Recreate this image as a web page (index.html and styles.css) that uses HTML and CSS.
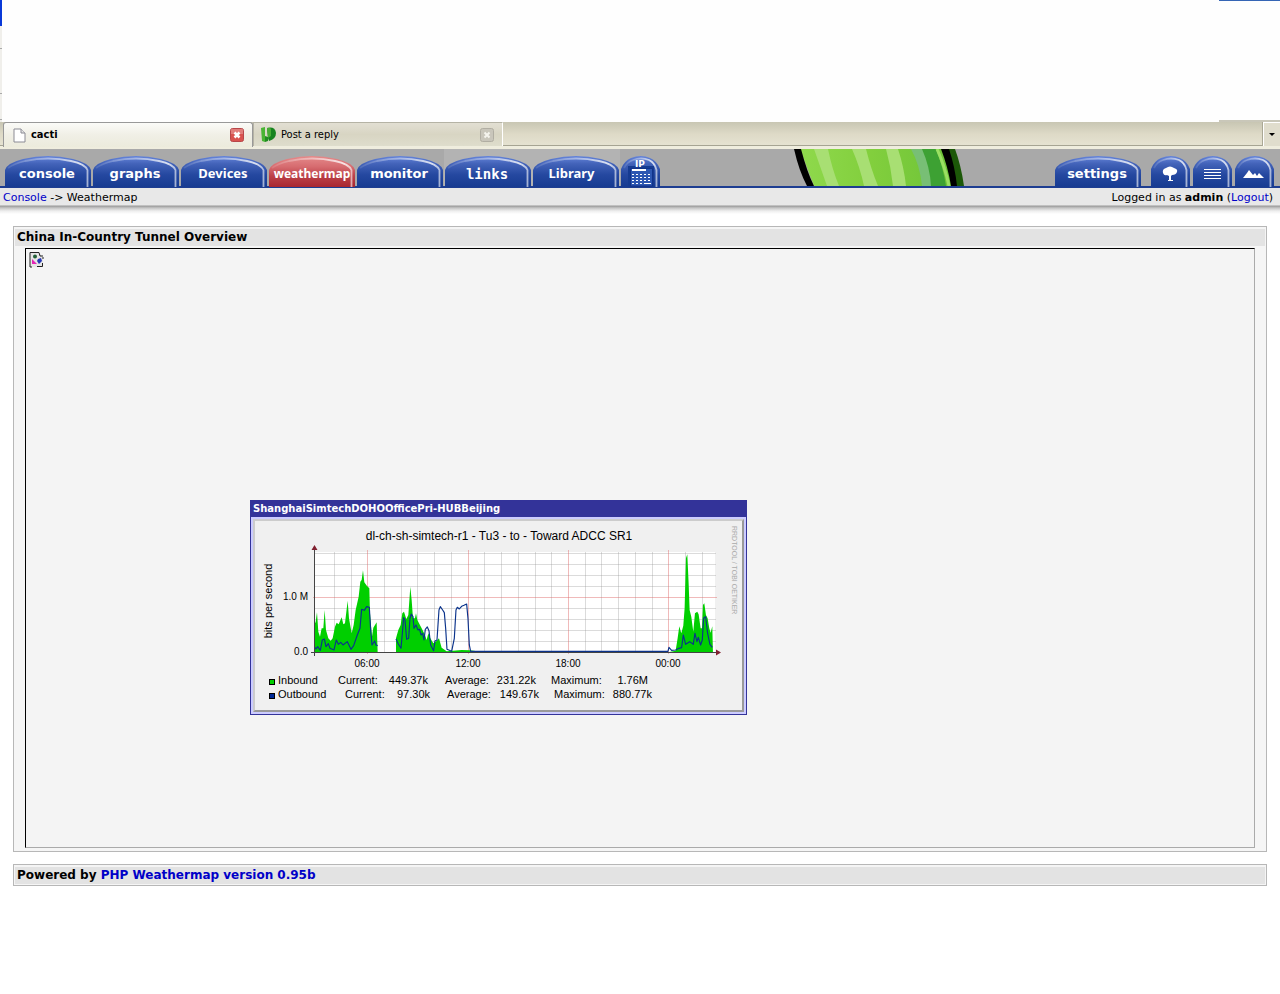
FILE: index.html
```html
<!DOCTYPE html>
<html lang="en">
<head>
<meta charset="utf-8">
<title>cacti</title>
<link rel="stylesheet" href="styles.css">
</head>
<body>
<svg class="defs" aria-hidden="true">
  <defs>
    <linearGradient id="blue" x1="0" y1="0" x2="0" y2="1"><stop offset="0" stop-color="#6685da"/><stop offset=".25" stop-color="#4363b9"/><stop offset=".6" stop-color="#2548a0"/><stop offset="1" stop-color="#173b91"/></linearGradient>
    <linearGradient id="red" x1="0" y1="0" x2="0" y2="1"><stop offset="0" stop-color="#e58b8b"/><stop offset=".35" stop-color="#d66b6f"/><stop offset=".65" stop-color="#bc4048"/><stop offset="1" stop-color="#a82730"/></linearGradient>
    <linearGradient id="shine" x1="0" y1="0" x2="1" y2="0"><stop offset="0" stop-color="#fff" stop-opacity=".1"/><stop offset=".5" stop-color="#fff" stop-opacity=".45"/><stop offset=".9" stop-color="#fff" stop-opacity=".8"/><stop offset="1" stop-color="#fff" stop-opacity=".6"/></linearGradient>
    <symbol id="wide" viewBox="0 0 86 31"><path d="M0 31V14Q2 7 18 3Q43-3 68 3Q84 7 86 14V31Z"/><path d="M3 12Q8 8 20 5Q43 0 66 5Q80 8 82.500 14V31" fill="none" stroke="url(#shine)" stroke-width="1.800"/></symbol>
    <symbol id="small" viewBox="0 0 39 31"><path d="M0 31V13Q3 5 10 2Q20-2 29 2Q36 5 39 13V31Z"/><path d="M3 12Q6 6 12 4Q20 1 28 4Q34 7 35.500 14V31" fill="none" stroke="url(#shine)" stroke-width="1.800"/></symbol>
  </defs>
</svg>

<div class="chrome"><div class="edge"><i class="edge-title"></i><i class="edge-menu"></i><i class="edge-bar"></i><i class="edge-bar"></i></div><div class="chrome-end"></div></div>

<div class="tabstrip">
  <div class="btab active">
    <svg width="13" height="15" viewBox="0 0 13 15"><path d="M1 1H8L12 5V14H1Z" fill="#fff" stroke="#8b8b94"/><path d="M8 1V5H12" fill="#e4e4e4" stroke="#8b8b94"/></svg>
    <span>cacti</span>
    <button class="close" aria-label="Close cacti"><svg width="14" height="14" viewBox="0 0 14 14"><rect x=".500" y=".500" width="13" height="13" rx="2" fill="#d9534f" stroke="#b8474a"/><path d="M1 1H13V6H1Z" fill="#fff" opacity=".25"/><path d="M4.500 4.500L9.500 9.500M9.500 4.500L4.500 9.500" stroke="#fff" stroke-width="2.500"/></svg></button>
  </div>
  <div class="btab">
    <svg width="15" height="16" viewBox="0 0 15 16"><path d="M0 1L4 0V15L1 14Z" fill="#49b434"/><path d="M4 9L7 10V14L4 15Z" fill="#208c20"/><path d="M6 1Q14-1 15 6Q15 12 8 14L7 11Z" fill="#16821e"/><path d="M6 1Q9 0 10 2V9L7 11Z" fill="#46ac34"/></svg>
    <span>Post a reply</span>
    <button class="close" aria-label="Close Post a reply"><svg width="14" height="14" viewBox="0 0 14 14"><rect x=".500" y=".500" width="13" height="13" rx="2" fill="#c9c6bb" stroke="#b1aea3"/><path d="M4.500 4.500L9.500 9.500M9.500 4.500L4.500 9.500" stroke="#f5f4ee" stroke-width="2"/></svg></button>
  </div>
  <button class="tablist" aria-label="List all tabs"><svg width="6" height="3" viewBox="0 0 6 3"><path d="M0 0H6L3 3Z"/></svg></button>
</div>

<header class="banner">
  <svg class="cactus" width="170" height="37" viewBox="0 0 170 37" aria-hidden="true">
    <defs><linearGradient id="leaf"><stop offset="0" stop-color="#8fd94c"/><stop offset=".45" stop-color="#82cf3d"/><stop offset="1" stop-color="#6cc238"/></linearGradient></defs>
    <path d="M6 0H150L164 37H20Z" fill="url(#leaf)"/>
    <path d="M20 0H34Q38 20 45 37H33Q27 20 20 0ZM58 0H72Q77 20 84 37H70Q66 18 58 0ZM92 0H104Q110 18 112 37H99Q97 18 92 0Z" fill="#a8df73"/>
    <path d="M117 0H130Q136 18 138 37H128Q126 16 117 0Z" fill="#78bf75"/>
    <path d="M128 0H142Q149 18 152 37H137Q136 18 128 0Z" fill="#3da133"/>
    <path d="M143 0Q151 18 155 37" fill="none" stroke="#9be063" stroke-width="3"/>
    <path d="M0 0H7Q13 23 20 37H13Q5 22 0 0ZM147 0H158Q166 18 169 37H157Q154 18 147 0Z"/>
    <path d="M155 0H161Q167 16 170 37H163Q161 18 155 0Z" fill="#1c5808"/>
  </svg>
  <nav class="tabs">
    <a class="tab" href="#"><svg fill="url(#blue)"><use href="#wide"/></svg><span>console</span></a>
    <a class="tab" href="#"><svg fill="url(#blue)"><use href="#wide"/></svg><span>graphs</span></a>
    <a class="tab plain" href="#"><svg fill="url(#blue)"><use href="#wide"/></svg><span>Devices</span></a>
    <a class="tab plain tight" href="#"><svg fill="url(#red)"><use href="#wide"/></svg><span>weathermap</span></a>
    <a class="tab" href="#"><svg fill="url(#blue)"><use href="#wide"/></svg><span>monitor</span></a>
    <a class="tab mono pale" href="#"><svg fill="url(#blue)"><use href="#wide"/></svg><span>links</span></a>
    <a class="tab plain library pale" href="#"><svg fill="url(#blue)"><use href="#wide"/></svg><span>Library</span></a>
    <a class="tab icon" href="#" aria-label="IP subnet calculator"><svg fill="url(#blue)"><use href="#small"/></svg><svg class="glyph" viewBox="0 0 39 31"><path d="M7 10H33V31H7Z" fill="#163b91"/><path d="M9.500 12.500H31.500V30H9.500Z" fill="#2d57b2" stroke="#12338a"/><text x="14" y="11" class="ip">IP</text><path d="M11 14H25" stroke="#fff" stroke-width="2"/><path d="M11 18.500H30M11 21.500H30M11 24.500H30M11 27.500H23" stroke="#fff" stroke-width="1" stroke-dasharray="2 2"/><path d="M23 27.500H30" stroke="#fff"/></svg></a>
  </nav>
  <nav class="tabs right">
    <a class="tab settings" href="#"><svg fill="url(#blue)"><use href="#wide"/></svg><span>settings</span></a>
    <a class="tab icon" href="#" aria-label="Tree view"><svg fill="url(#blue)"><use href="#small"/></svg><svg class="glyph" viewBox="0 0 39 31" fill="#fff"><path d="M12 17Q11 13 15 12Q19 9 23 12Q27 13 26 16Q25 19 21 19L20 20V24H22V25H17V24H18V20L16 19Q13 20 12 17Z"/></svg></a>
    <a class="tab icon" href="#" aria-label="List view"><svg fill="url(#blue)"><use href="#small"/></svg><svg class="glyph" viewBox="0 0 39 31"><path d="M11 13.500H28M11 16.500H28M11 19.500H28M11 22.500H28" stroke="#fff"/></svg></a>
    <a class="tab icon" href="#" aria-label="Preview view"><svg fill="url(#blue)"><use href="#small"/></svg><svg class="glyph" viewBox="0 0 39 31" fill="#fff"><path d="M8 22L12 17L14 14L18 19L20 17L22 20L24 17L27 20L29 22Z"/></svg></a>
  </nav>
</header>

<div class="crumbs">
  <div><a href="#">Console</a> -&gt; Weathermap</div>
  <div>Logged in as <b>admin</b> (<a href="#">Logout</a>)</div>
</div>

<main>
  <section class="panel">
    <h1>China In-Country Tunnel Overview</h1>
    <div class="map">
      <svg class="broken" width="16" height="16" viewBox="0 0 16 16" role="img" aria-label="Missing image"><path d="M1 1H10L14 5V15H1Z" fill="#e5e5e5"/><path d="M1 15V.500H10M1 15H3M10 .500L11 4H14M14 5V7M8 14.500H13.500V11" fill="none" stroke="#222"/><circle cx="6" cy="4.500" r="2" fill="#225e36"/><path d="M3 7L8 12H3Z" fill="#e323b5"/><path d="M9 7L12 6L13 9L10 12L8 9Z" fill="#2637b4"/></svg>
      <div class="popup">
        <h2>ShanghaiSimtechDOHOOfficePri-HUBBeijing</h2>
        <div class="frame">
          <svg class="graph" viewBox="0 1 487 189" role="img" aria-label="Traffic graph">
            <path d="M60 32H460V132H60Z" fill="#fff"/>
            <path d="M60 121.500H461M60 110.500H461M60 99.500H461M60 88.500H461M60 66.500H461M60 55.500H461M60 44.500H461M60 33.500H461M79.500 32V133M96.500 32V133M129.500 32V133M146.500 32V133M162.500 32V133M179.500 32V133M196.500 32V133M229.500 32V133M246.500 32V133M263.500 32V133M280.500 32V133M296.500 32V133M330.500 32V133M346.500 32V133M363.500 32V133M380.500 32V133M397.500 32V133M430.500 32V133M447.500 32V133" stroke="#999" stroke-opacity=".35"/>
            <path d="M58 77.500H462M112.500 30V134M213.500 30V134M313.500 30V134M413.500 30V134" stroke="#d66" stroke-opacity=".45"/>
            <g transform="translate(-10 -25) scale(.3333)">
              <path d="M208 472V390L212 380L216 352L220 410L225 425L230 400L235 400L239 345L243 405L250 430L257 437L263 430L270 395L275 383L281 388L290 367L295 388L300 385L308 317L312 370L320 415L326 390L332 345L341 305L346 260L350 255L354 226L358 262L366 273L373 280L375 355L381 425L385 398L395 382L398 472ZM453 472V430L460 405L467 390L472 355L477 350L484 372L490 360L496 275L500 315L504 370L510 370L513 355L517 375L530 400L540 420L545 435L550 415L556 430L565 445L575 438L582 430L590 458L605 469L650 465L675 466L720 472ZM1270 472L1292 467L1298 430L1303 394L1309 415L1315 392L1319 340L1323 190L1327 178L1331 265L1334 345L1339 365L1345 410L1350 355L1357 350L1361 358L1367 400L1371 400L1374 330L1378 325L1383 360L1388 370L1393 400L1397 413L1402 394L1404 472Z" fill="#00cf00"/>
              <path d="M208 455L213 462L218 455L226 466L232 435L238 432L243 455L250 446L255 460L267 465L274 435L280 448L287 442L294 450L307 440L318 463L326 452L337 420L345 400L350 343L358 346L365 335L373 337L377 405L381 450L389 438L393 450L398 452M453 432L460 447L468 460L473 405L476 368L480 375L485 433L491 430L495 370L499 357L504 365L507 400L513 390L519 405L524 403L528 420L533 415L537 435L541 403L547 396L552 407L557 450L566 467L570 438L576 435L582 345L586 335L593 345L598 353L602 400L606 463L620 469L628 430L633 345L637 337L643 342L650 334L657 331L665 327L669 370L673 450L677 469H1269L1272 457L1280 466L1292 465L1302 460L1310 458L1315 420L1322 448L1334 440L1345 448L1350 415L1356 440L1360 427L1367 450L1372 435L1376 370L1382 365L1388 415L1395 448L1402 457" fill="none" stroke="#0b338b" stroke-width="3.500" stroke-linejoin="round"/>
            </g>
            <path d="M59.500 136V28M56 132.500H463" stroke="#444" fill="none"/>
            <path d="M56.500 30L59.500 25L62.500 30ZM461 129.500L466 132.500L461 135.500Z" fill="#802030"/>
            <g class="title"><text x="244" y="20" text-anchor="middle">dl-ch-sh-simtech-r1 - Tu3 - to - Toward ADCC SR1</text></g>
            <g class="axis"><text x="53" y="80" text-anchor="end">1.0 M</text><text x="53" y="135" text-anchor="end">0.0</text><text x="112" y="147" text-anchor="middle">06:00</text><text x="213" y="147" text-anchor="middle">12:00</text><text x="313" y="147" text-anchor="middle">18:00</text><text x="413" y="147" text-anchor="middle">00:00</text></g>
            <g class="key">
              <text transform="translate(17 81) rotate(-90)" text-anchor="middle">bits per second</text>
              <rect x="14.500" y="159.500" width="5" height="5" fill="#00cf00" stroke="#000"/><rect x="14.500" y="173.500" width="5" height="5" fill="#002a97" stroke="#000"/>
              <text x="23" y="164">Inbound</text><text x="83" y="164">Current:</text><text x="173" y="164" text-anchor="end">449.37k</text><text x="190" y="164">Average:</text><text x="281" y="164" text-anchor="end">231.22k</text><text x="296" y="164">Maximum:</text><text x="393" y="164" text-anchor="end">1.76M</text>
              <text x="23" y="178">Outbound</text><text x="90" y="178">Current:</text><text x="175" y="178" text-anchor="end">97.30k</text><text x="192" y="178">Average:</text><text x="284" y="178" text-anchor="end">149.67k</text><text x="299" y="178">Maximum:</text><text x="397" y="178" text-anchor="end">880.77k</text>
            </g>
            <text class="credit" transform="translate(477 6) rotate(90)">RRDTOOL / TOBI OETIKER</text>
          </svg>
        </div>
      </div>
    </div>
  </section>
  <footer class="panel"><p>Powered by <a href="#">PHP Weathermap version 0.95b</a></p></footer>
</main>
</body>
</html>
```
FILE: styles.css
```css
* { box-sizing: border-box; }
body { margin: 0; background: #fff; color: #000; font: 11px/16px "DejaVu Sans", Verdana, sans-serif; }
a { color: #0000c8; text-decoration: none; }
button { padding: 0; border: 0; background: none; }
.defs { position: absolute; width: 0; height: 0; }

.chrome { display: flex; justify-content: space-between; height: 122px; background: #fefefe; }
.edge { display: flex; flex-direction: column; width: 2px; background: #f0efeb; }
.edge-title { height: 26px; background: #0939d8; }
.edge-menu { height: 23px; border-bottom: 1px solid #aaa; }
.edge-bar { height: 45px; border-bottom: 1px solid #aaa; }
.edge-bar:last-child { height: 26px; }
.chrome-end { width: 61px; border-top: 1px solid #3565b5; border-bottom: 2px solid #c9c7b9; }

.tabstrip { display: flex; height: 27px; padding-left: 3px; background: linear-gradient(#c8c6b3, #dedac7 45%, #e5e2d1 85%, #a6a493 86%, #a6a493 89%, #efedde 90%); font: 11px/24px "DejaVu Sans Condensed", Tahoma, sans-serif; }
.btab { display: flex; align-items: center; width: 250px; height: 24px; padding: 1px 8px 0 7px; border: 1px solid #b5b3a5; border-bottom: 0; border-right-color: #fff; background: linear-gradient(#e2dfd3, #d8d5c3 50%, #deddcc); }
.btab span { flex: 1; margin-left: 5px; }
.btab.active { height: 25px; padding: 0 8px 0 9px; border-color: #999; border-radius: 3px 3px 0 0; background: linear-gradient(#fbfbf8, #f0efe6 50%, #ecebdc); }
.btab.active span { font-weight: bold; }
.close { display: flex; }
.tablist { display: flex; align-items: center; justify-content: center; width: 18px; height: 24px; margin-left: auto; border-left: 1px solid #aaa895; box-shadow: inset 1px 1px #fff; background: #e0ddcd; }

.banner { position: relative; display: flex; justify-content: space-between; height: 39px; padding: 0 6px 0 5px; background: #a9a9a9; border-bottom: 2px solid #1d3d91; }
.cactus { position: absolute; left: 62%; top: 0; }
.tabs { display: flex; gap: 2px; }
.tab { position: relative; display: flex; justify-content: center; width: 86px; padding: 15px 2px 0 0; color: #fff; font: bold 13px/20px "DejaVu Sans", Verdana, sans-serif; }
.tab svg { position: absolute; left: 0; top: 7px; width: 100%; height: 31px; }
.tab span { position: relative; }
.tab.plain { font: bold 13px/18px "Noto Sans", sans-serif; }
.tab.tight { padding-right: 0; font: bold 12px/20px "Noto Sans", sans-serif; }
.tab.library { padding-right: 9px; }
.tab.mono { font: bold 14px/20px "DejaVu Sans Mono", monospace; }
.tab.pale { background: #b3b3b3; box-shadow: -1px 0 #b3b3b3, 1px 0 #b3b3b3; }
.tab.icon { width: 39px; }
.tabs.right { gap: 3px; }
.tab.settings { margin-right: 7px; }
.ip { font: bold 9px "DejaVu Sans", sans-serif; fill: #fff; }

.crumbs { display: flex; justify-content: space-between; height: 26px; padding: 2px 7px 0 3px; background: linear-gradient(#e8e8e8 17px, #999 18px, #c6c6c6 20px, #eee 23px, #fff); }

main { padding: 12px 13px; }
.panel { padding: 1px; border: 1px solid #b7b7b7; background: #f5f5f5; }
.panel h1, .panel p { margin: 1px 0 0; padding: 0 2px; background: #e3e3e3; font: bold 12px/17px "DejaVu Sans", Verdana, sans-serif; }
.panel p { margin-bottom: 0; }
.map { position: relative; height: 600px; margin: 2px 10px; padding: 3px; border: 1px solid #aaa; border-top-color: #000; border-left-color: #000; background: #f4f4f4; }
.broken { display: block; }
.popup { position: absolute; left: 224px; top: 251px; width: 497px; border: 1px solid #339; background: #ccf; }
.popup h2 { margin: 0; padding: 0 2px; background: #339; color: #fff; font: bold 10px/16px "DejaVu Sans", Verdana, sans-serif; }
.frame { padding: 2px; }
.graph { display: block; width: 100%; border: 2px solid; border-color: #ccc #999 #999 #ccc; background: #f0f0f0; font-family: "Liberation Sans", Arial, sans-serif; }
.title { font-size: 12px; }
.axis { font-size: 10px; }
.key { font-size: 11px; }
.credit { font-size: 7px; fill: #aaa; }
footer.panel { margin-top: 12px; }
```
